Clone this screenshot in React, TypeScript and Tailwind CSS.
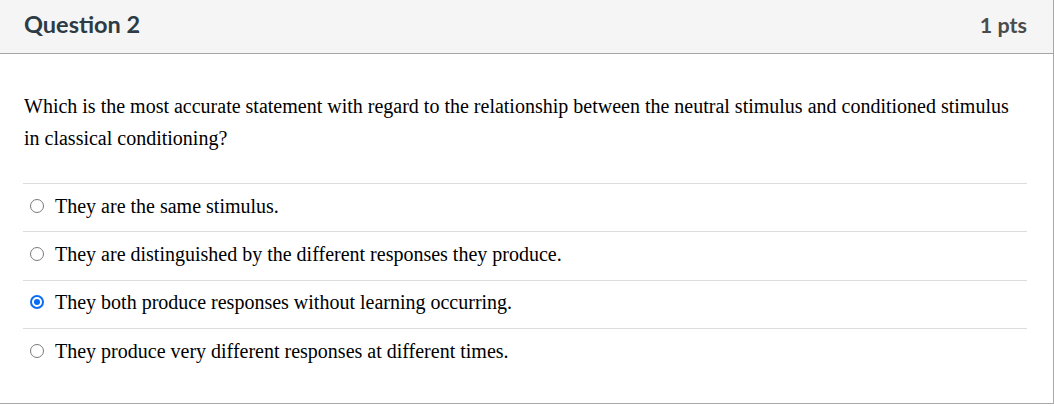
import React from "react";

const answers = [
  { text: "They are the same stimulus.", checked: false },
  { text: "They are distinguished by the different responses they produce.", checked: false },
  { text: "They both produce responses without learning occurring.", checked: true },
  { text: "They produce very different responses at different times.", checked: false },
];

function Radio({ checked }: { checked: boolean }) {
  return checked ? (
    <span className="shrink-0 w-[14px] h-[14px] rounded-full border-2 border-[#0a6cf5] flex items-center justify-center ml-[7px] mr-[11px]">
      <span className="w-[6px] h-[6px] rounded-full bg-[#0a6cf5]" />
    </span>
  ) : (
    <span className="shrink-0 w-[14px] h-[14px] rounded-full border border-[#7a7a7a] ml-[7px] mr-[11px]" />
  );
}

export default function App() {
  return (
    <div className="w-[1054px] h-[406px] bg-white overflow-hidden">
      <div className="w-[1054px] h-[404px] border-r border-b border-[#a8a8a8] flex flex-col">
        <div className="h-[54px] bg-[#f5f5f5] border-b border-[#a5a5a5] flex items-center justify-between pl-[24px] pr-[26px] pb-[3px]">
          <div className="font-['Lato',sans-serif] font-bold text-[23.5px] text-[#2d3b45]">Question 2</div>
          <div className="font-['Lato',sans-serif] font-bold text-[21.5px] text-[#4b4b4b]">1 pts</div>
        </div>
        <div className="pl-[23px] pr-[26px] pt-[36px] font-['Liberation_Serif',serif] text-black">
          <p className="text-[20px] leading-[32px] pl-[1px]">
            Which is the most accurate statement with regard to the relationship between the neutral stimulus and conditioned stimulus in classical conditioning?
          </p>
          <div className="mt-[29px]">
            {answers.map((a, i) => (
              <label key={i} className="flex items-center h-[48.3px] pb-[4px] border-t border-[#dcdcdc] text-[20px]">
                <Radio checked={a.checked} />
                <span>{a.text}</span>
              </label>
            ))}
          </div>
        </div>
      </div>
    </div>
  );
}
